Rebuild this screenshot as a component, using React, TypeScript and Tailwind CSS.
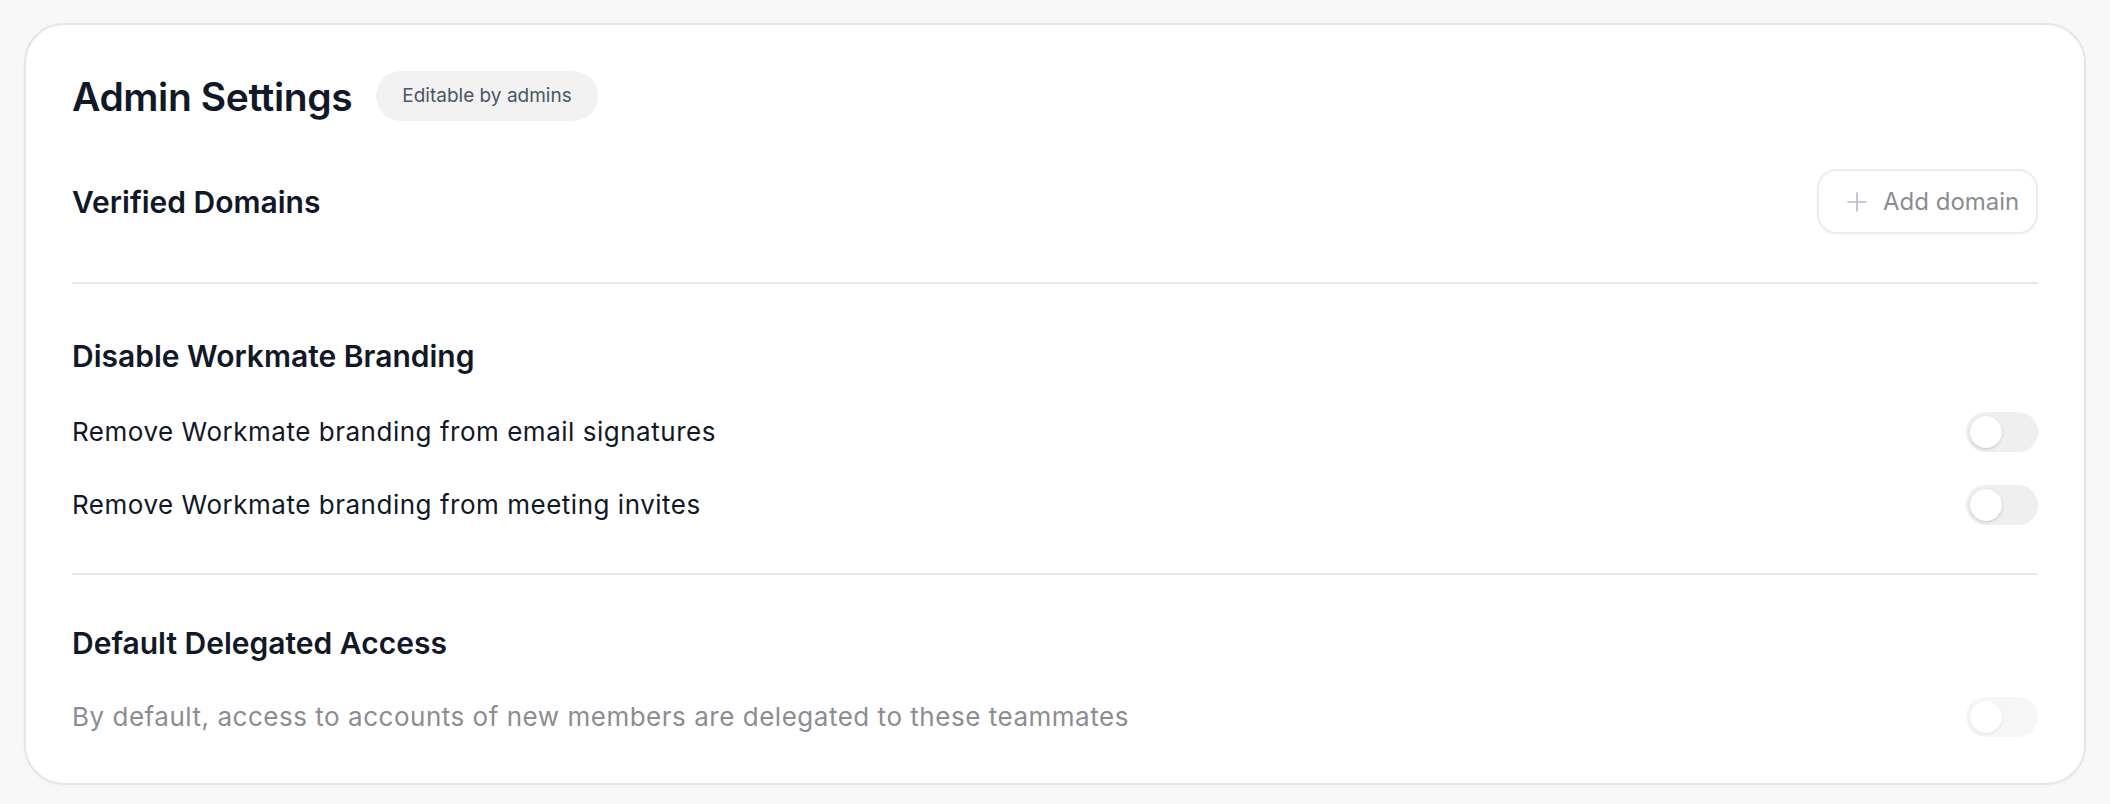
import React from "react";

function Toggle({ faded = false }: { faded?: boolean }) {
  return (
    <div
      className={`relative h-[40px] w-[72px] shrink-0 rounded-full bg-[#efefef] ${
        faded ? "opacity-50" : ""
      }`}
    >
      <div className="absolute left-[4px] top-[4px] h-[32px] w-[32px] rounded-full bg-white shadow-[0_1px_3px_rgba(0,0,0,0.18)]" />
    </div>
  );
}

export default function App() {
  return (
    <div
      className="min-h-[804px] w-full bg-[#f8f8f8] px-[24px] pt-[23px] pb-[20px]"
      style={{ fontFamily: "Inter, 'Noto Sans', sans-serif" }}
    >
      <div className="rounded-[40px] border-2 border-[#e6e6e6] bg-white px-[46px] pt-[46px] pb-[46px] shadow-[0_1px_4px_rgba(0,0,0,0.03)]">
        {/* Header */}
        <div className="flex h-[50px] items-center gap-[24px]">
          <h1 className="text-[39px] font-semibold leading-none tracking-[-0.01em] text-[#111827]">
            Admin Settings
          </h1>
          <span className="flex h-[50px] items-center rounded-full bg-[#f2f2f2] px-[26px] text-[19px] text-[#4b5563]">
            Editable by admins
          </span>
        </div>

        {/* Verified Domains */}
        <div className="mt-[48px] flex h-[65px] items-center justify-between">
          <h2 className="text-[30px] font-semibold leading-9 text-[#111827]">
            Verified Domains
          </h2>
          <button className="flex h-[65px] w-[221px] items-center gap-[14px] rounded-[20px] border-2 border-[#ececec] bg-white pl-[26px] text-[24px] font-normal text-[#8b8d93] shadow-[0_1px_3px_rgba(0,0,0,0.04)]">
            <svg
              width="24"
              height="24"
              viewBox="0 0 24 24"
              fill="none"
              stroke="#b5b9c4"
              strokeWidth="1.6"
              strokeLinecap="round"
            >
              <path d="M12 3v18M3 12h18" />
            </svg>
            Add domain
          </button>
        </div>

        <div className="mt-[48px] h-[2px] bg-[#e8e8e8]" />

        {/* Disable Workmate Branding */}
        <h2 className="mt-[54px] text-[30px] font-semibold leading-9 text-[#111827]">
          Disable Workmate Branding
        </h2>
        <div className="mt-[38px] flex items-center justify-between">
          <span className="text-[26px] leading-9 tracking-[0.02em] text-[#111827]">
            Remove Workmate branding from email signatures
          </span>
          <Toggle />
        </div>
        <div className="mt-[33px] flex items-center justify-between">
          <span className="text-[26px] leading-9 tracking-[0.02em] text-[#111827]">
            Remove Workmate branding from meeting invites
          </span>
          <Toggle />
        </div>

        <div className="mt-[48px] h-[2px] bg-[#e8e8e8]" />

        {/* Default Delegated Access */}
        <h2 className="mt-[50px] text-[30px] font-semibold leading-9 text-[#111827]">
          Default Delegated Access
        </h2>
        <div className="mt-[36px] flex items-center justify-between">
          <span className="text-[26px] leading-9 tracking-[0.02em] text-[#8b8d93]">
            By default, access to accounts of new members are delegated to these teammates
          </span>
          <Toggle faded />
        </div>
      </div>
    </div>
  );
}
